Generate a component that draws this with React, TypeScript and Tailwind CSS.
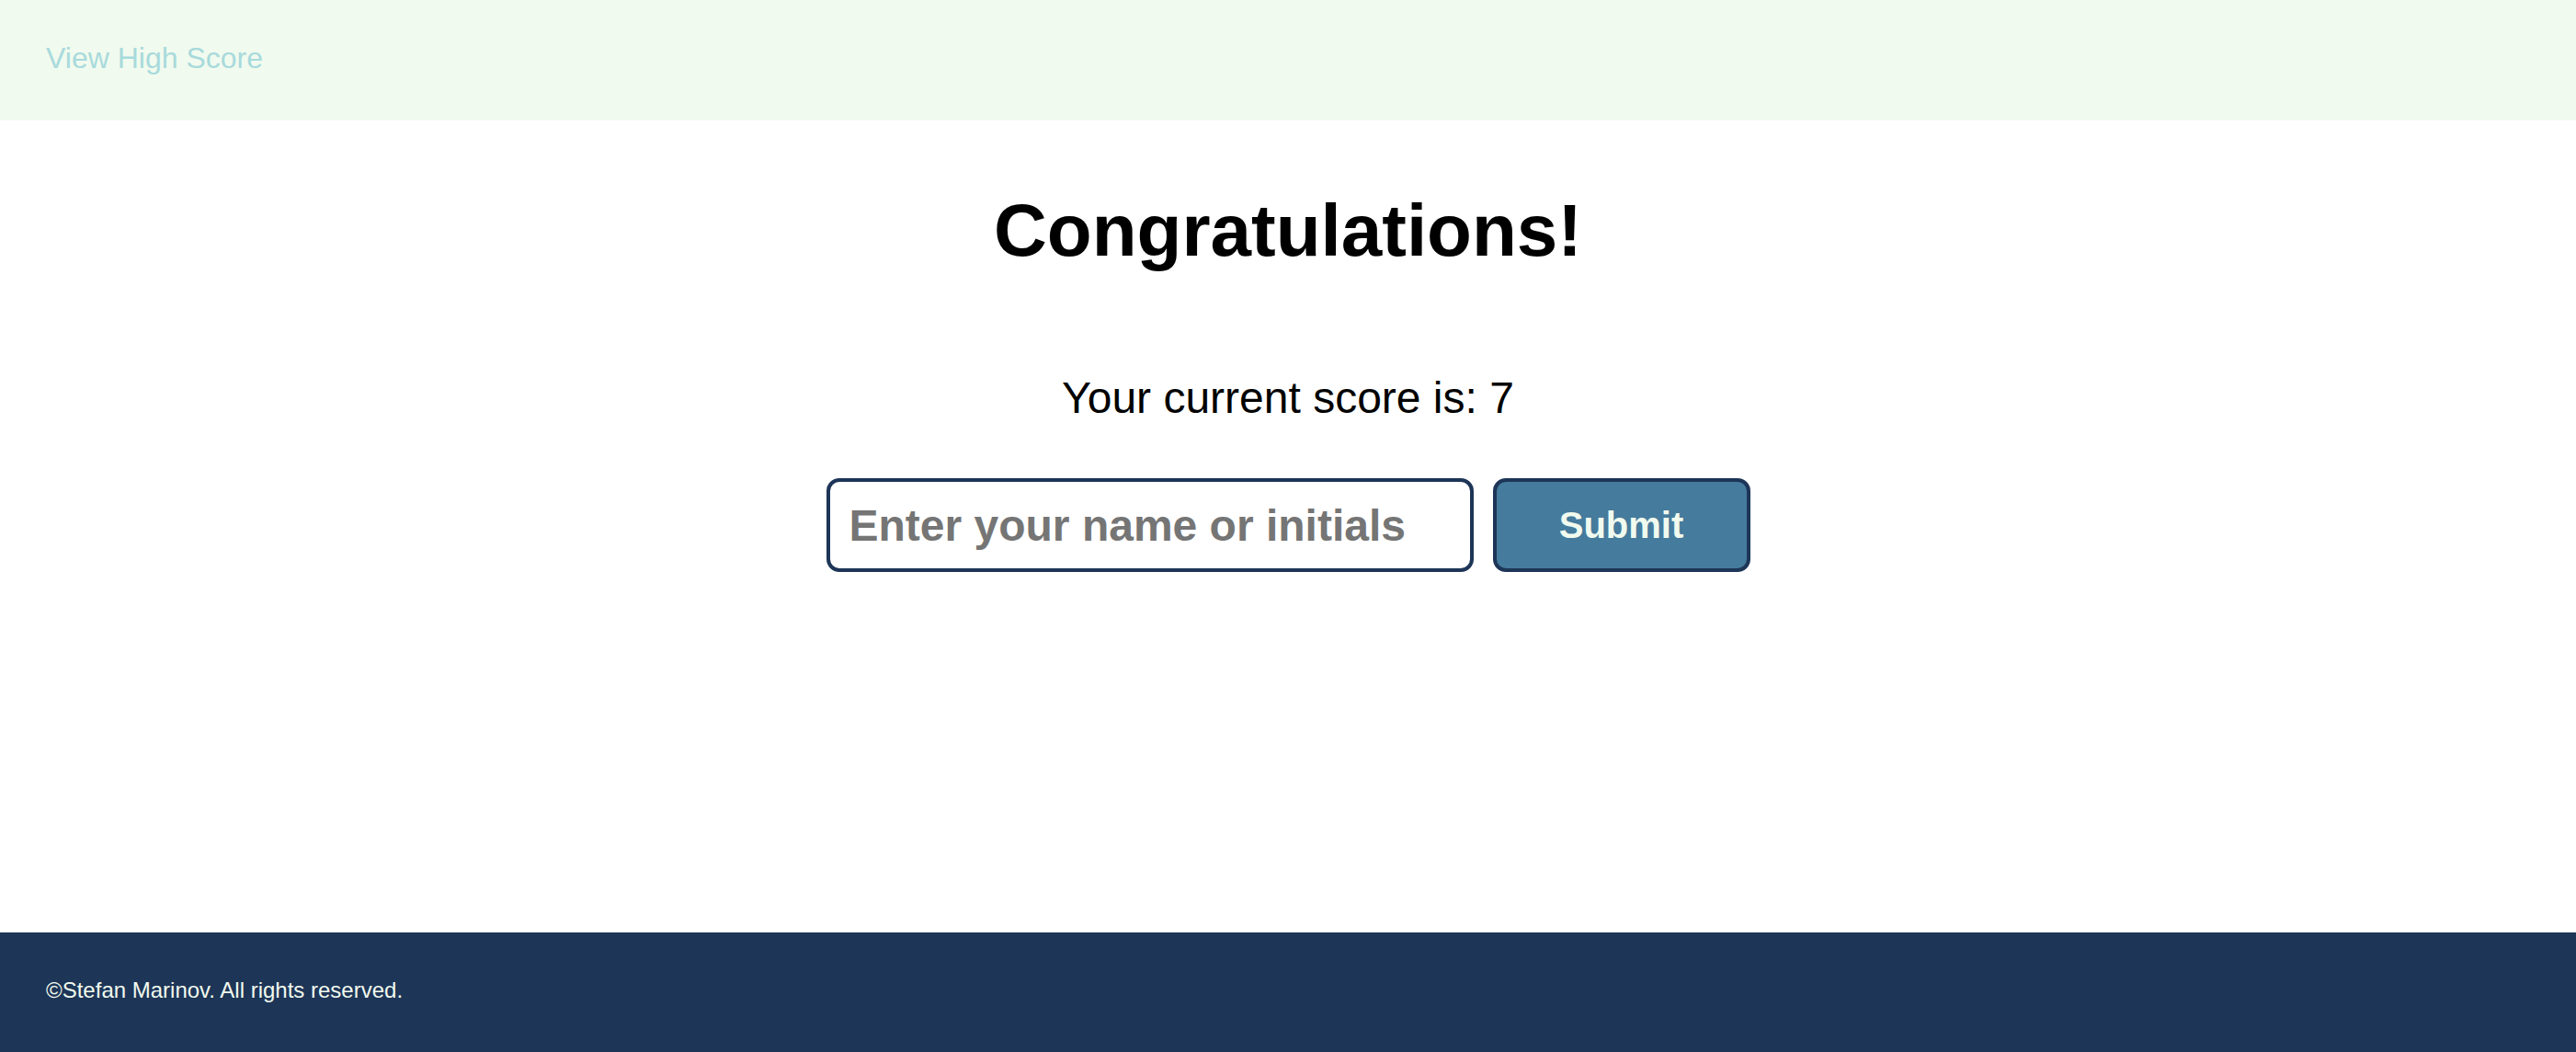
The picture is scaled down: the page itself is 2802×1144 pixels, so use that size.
export default function App() {
  return (
    <div className="h-screen flex flex-col bg-white font-['Liberation_Sans',Arial,sans-serif]">
      <header className="h-[131px] flex-shrink-0 flex items-center px-[50px] pb-[5px] bg-[#f1faee]">
        <a href="#" className="text-[32px] text-[#a8dadc]">
          View High Score
        </a>
      </header>

      <main className="flex-1 flex flex-col items-center">
        <h1 className="mt-[80px] text-[80px] leading-none font-bold text-black">
          Congratulations!
        </h1>
        <p className="mt-[118px] text-[48px] leading-none text-black">
          Your current score is: 7
        </p>
        <form
          className="mt-[63px] flex flex-row gap-[21px]"
          onSubmit={(e) => e.preventDefault()}
        >
          <input
            type="text"
            placeholder="Enter your name or initials"
            className="w-[704px] h-[102px] px-[21px] border-4 border-[#1d3557] rounded-[14px] bg-white text-[48px] font-bold text-black placeholder:text-[#757575] outline-none"
          />
          <button
            type="submit"
            className="w-[280px] h-[102px] border-4 border-[#1d3557] rounded-[14px] bg-[#457b9d] text-[40px] font-bold text-[#f1faee]"
          >
            Submit
          </button>
        </form>
      </main>

      <footer className="h-[130px] flex-shrink-0 flex items-center px-[50px] pb-[5px] bg-[#1d3557]">
        <p className="text-[24px] text-[#f1faee]">
          ©Stefan Marinov. All rights reserved.
        </p>
      </footer>
    </div>
  );
}
